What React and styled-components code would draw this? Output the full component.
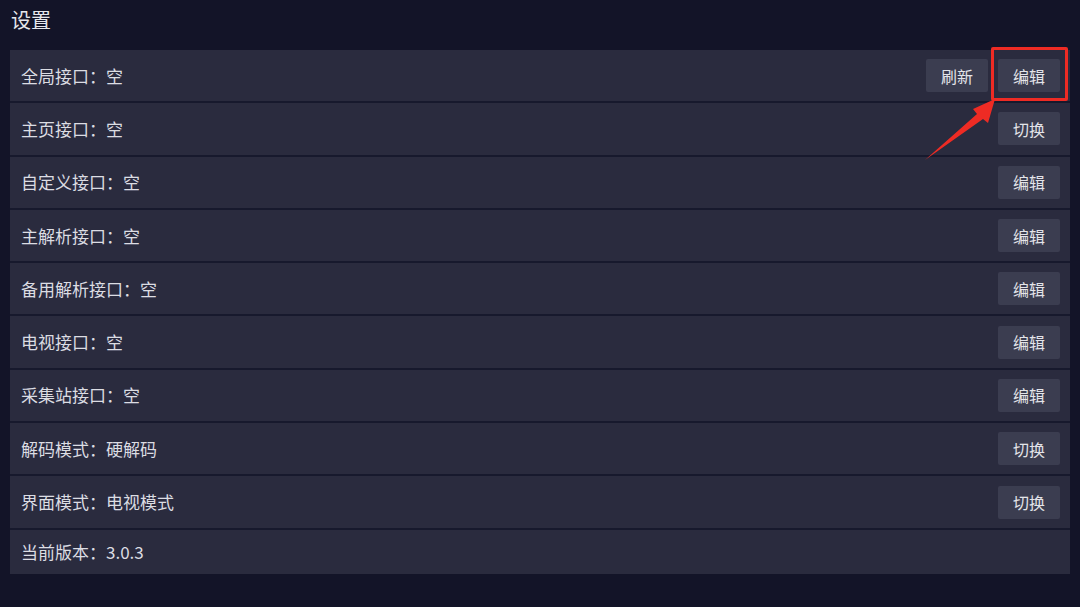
import React from "react";
import styled, { createGlobalStyle } from "styled-components";

const Global = createGlobalStyle`
  html, body { margin: 0; padding: 0; background: #131428; }
  body { font-family: "Noto Sans CJK SC", "Noto Sans", sans-serif; color: #dedfe4; }
`;

const Page = styled.div`
  width: 1080px;
  height: 607px;
  box-sizing: border-box;
  padding: 0 10px;
  background: #131428;
`;

const Title = styled.h1`
  margin: 0;
  height: 50px;
  padding-left: 1px;
  font-size: 20px;
  font-weight: 400;
  line-height: 40px;
  color: #e6e7ec;
`;

const Panel = styled.div`
  position: relative;
  display: flex;
  flex-direction: column;
  gap: 2px;
  background: #17192d;
  border-radius: 3px;
  overflow: visible;
`;

const Row = styled.div`
  display: flex;
  align-items: center;
  box-sizing: border-box;
  min-height: ${(p) => (p.$plain ? "44px" : "51.3px")};
  padding: 0 10px 0 11px;
  background: #2a2b3e;
  font-size: 17px;
  line-height: 24px;
`;

const Label = styled.span`
  color: #dcdde3;
`;

const Value = styled.span`
  color: #dcdde3;
`;

const Actions = styled.div`
  margin-left: auto;
  display: flex;
  gap: 10px;
`;

const BtnWrap = styled.div`
  position: relative;
`;

const Button = styled.button`
  width: 62px;
  height: 33px;
  border: 0;
  border-radius: 2px;
  background: #3b3d50;
  color: #e3e4e9;
  font-family: inherit;
  font-size: 16px;
  padding: 0;
  cursor: pointer;
`;

const Highlight = styled.div`
  position: absolute;
  left: -7px;
  right: -8px;
  top: -12px;
  bottom: -9px;
  border: 3px solid #ee2b24;
  border-radius: 2px;
  pointer-events: none;
`;

const Arrow = styled.svg`
  position: absolute;
  left: 910px;
  top: 40px;
  width: 100px;
  height: 130px;
  pointer-events: none;
`;

const rows = [
  { label: "全局接口：", value: "空", buttons: ["刷新", "编辑"], highlight: true },
  { label: "主页接口：", value: "空", buttons: ["切换"] },
  { label: "自定义接口：", value: "空", buttons: ["编辑"] },
  { label: "主解析接口：", value: "空", buttons: ["编辑"] },
  { label: "备用解析接口：", value: "空", buttons: ["编辑"] },
  { label: "电视接口：", value: "空", buttons: ["编辑"] },
  { label: "采集站接口：", value: "空", buttons: ["编辑"] },
  { label: "解码模式：", value: "硬解码", buttons: ["切换"] },
  { label: "界面模式：", value: "电视模式", buttons: ["切换"] },
  { label: "当前版本：", value: "3.0.3", buttons: [] },
];

export default function App() {
  const ox = 920;
  const oy = 90;
  const pts = [
    [925, 160],
    [977, 114],
    [973, 109],
    [995, 99],
    [988, 123],
    [983, 119],
  ]
    .map(([x, y]) => `${x - ox},${y - oy}`)
    .join(" ");
  return (
    <Page>
      <Global />
      <Title>设置</Title>
      <Panel>
        {rows.map((r, i) => (
          <Row key={i} $plain={r.buttons.length === 0}>
            <Label>{r.label}</Label>
            <Value>{r.value}</Value>
            {r.buttons.length > 0 && (
              <Actions>
                {r.buttons.map((b, j) => (
                  <BtnWrap key={j}>
                    <Button>{b}</Button>
                    {r.highlight && j === r.buttons.length - 1 && <Highlight />}
                  </BtnWrap>
                ))}
              </Actions>
            )}
          </Row>
        ))}
        <Arrow viewBox="0 0 100 130" style={{ left: ox - 10, top: oy - 50 }}>
          <polygon points={pts} fill="#ee2b24" />
        </Arrow>
      </Panel>
    </Page>
  );
}
